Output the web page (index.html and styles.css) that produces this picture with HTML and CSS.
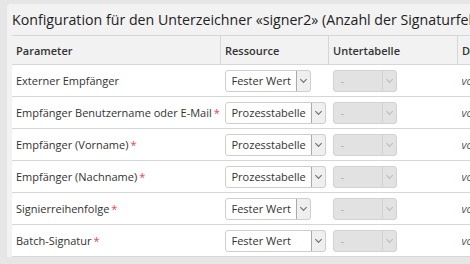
FILE: index.html
```html
<!DOCTYPE html>
<html lang="de">
<head>
    <meta charset="UTF-8">
    <title>Konfiguration</title>
    <link rel="stylesheet" href="styles.css">
</head>
<body>
    <div class="panel">
        <h1 class="title">Konfiguration für den Unterzeichner «signer2» (Anzahl der Signaturfelder: 1)</h1>
        <table class="config">
            <thead>
                <tr>
                    <th class="col-param">Parameter</th>
                    <th class="col-res">Ressource</th>
                    <th class="col-sub">Untertabelle</th>
                    <th class="col-data">Daten</th>
                </tr>
            </thead>
            <tbody>
                <tr>
                    <td>Externer Empfänger</td>
                    <td><div class="dropdown w-short"><span class="value">Fester Wert</span><span class="arrow"></span></div></td>
                    <td><div class="dropdown disabled"><span class="value">-</span><span class="arrow"></span></div></td>
                    <td class="hint">vom Benutzer</td>
                </tr>
                <tr>
                    <td>Empfänger Benutzername oder E-Mail<span class="req">*</span></td>
                    <td><div class="dropdown w-long"><span class="value">Prozesstabelle</span><span class="arrow"></span></div></td>
                    <td><div class="dropdown disabled"><span class="value">-</span><span class="arrow"></span></div></td>
                    <td class="hint">vom Benutzer</td>
                </tr>
                <tr>
                    <td>Empfänger (Vorname)<span class="req">*</span></td>
                    <td><div class="dropdown w-long"><span class="value">Prozesstabelle</span><span class="arrow"></span></div></td>
                    <td><div class="dropdown disabled"><span class="value">-</span><span class="arrow"></span></div></td>
                    <td class="hint">vom Benutzer</td>
                </tr>
                <tr>
                    <td>Empfänger (Nachname)<span class="req">*</span></td>
                    <td><div class="dropdown w-long"><span class="value">Prozesstabelle</span><span class="arrow"></span></div></td>
                    <td><div class="dropdown disabled"><span class="value">-</span><span class="arrow"></span></div></td>
                    <td class="hint">vom Benutzer</td>
                </tr>
                <tr>
                    <td>Signierreihenfolge<span class="req">*</span></td>
                    <td><div class="dropdown w-short"><span class="value">Fester Wert</span><span class="arrow"></span></div></td>
                    <td><div class="dropdown disabled"><span class="value">-</span><span class="arrow"></span></div></td>
                    <td class="hint">vom Benutzer</td>
                </tr>
                <tr>
                    <td>Batch-Signatur<span class="req">*</span></td>
                    <td><div class="dropdown w-long"><span class="value">Fester Wert</span><span class="arrow"></span></div></td>
                    <td><div class="dropdown disabled"><span class="value">-</span><span class="arrow"></span></div></td>
                    <td class="hint">vom Benutzer</td>
                </tr>
            </tbody>
        </table>
    </div>
</body>
</html>
```

FILE: styles.css
```css
body {
    font-family: "Open Sans", "DejaVu Sans", sans-serif;
    margin: 0;
    padding: 4px 0 0 7px;
    background-color: #e6e6e6;
    color: #333;
    overflow: hidden;
}

.panel {
    background-color: #f2f2f2;
    border-radius: 4px 0 0 0;
    padding: 0 0 0 5px;
    width: 700px;
}

.title {
    font-size: 14.2px;
    font-weight: normal;
    color: #222;
    margin: 0;
    height: 31px;
    line-height: 31px;
    white-space: nowrap;
}

.config {
    border-collapse: collapse;
    font-size: 11px;
    table-layout: fixed;
    width: 695px;
}

.config th {
    text-align: left;
    font-weight: 600;
    height: 28px;
    padding: 0 4px;
    border-top: 1px solid #d6d6d6;
    border-bottom: 1px solid #d6d6d6;
    border-right: 1px solid #d6d6d6;
    background-color: #f2f2f2;
}

.col-param { width: 200px; }
.col-res { width: 99px; }
.col-sub { width: 120px; }

.config td {
    background-color: #fff;
    height: 31px;
    padding: 0 4px;
    border-bottom: 1px solid #d6d6d6;
    white-space: nowrap;
    vertical-align: middle;
}

.req {
    color: #e5484d;
    margin-left: 2px;
}

.hint {
    font-style: italic;
    color: #555;
}

.dropdown {
    display: flex;
    align-items: stretch;
    height: 20px;
    border: 1px solid #cfcfcf;
    border-radius: 3px;
    background-color: #fff;
    color: #333;
    overflow: hidden;
}

.w-short { width: 84px; }
.w-long { width: 99px; }

.dropdown .value {
    flex: 1;
    padding-left: 6px;
    line-height: 20px;
}

.dropdown .arrow {
    width: 13px;
    border: 1px solid #aaa;
    border-radius: 0 3px 3px 0;
    margin: -1px -1px -1px 0;
    background-color: #efefef;
    position: relative;
}

.dropdown .arrow::after {
    content: "";
    position: absolute;
    left: 4px;
    top: 6px;
    width: 4px;
    height: 4px;
    border-right: 1px solid #666;
    border-bottom: 1px solid #666;
    transform: rotate(45deg);
}

.dropdown.disabled {
    width: 62px;
    background-color: #e2e2e2;
    border-color: #d2d2d2;
    color: #aaa;
}

.dropdown.disabled .value {
    padding-left: 7px;
}

.dropdown.disabled .arrow {
    border-color: #d2d2d2;
    background-color: #e2e2e2;
}

.dropdown.disabled .arrow::after {
    border-color: #bbb;
}
```
